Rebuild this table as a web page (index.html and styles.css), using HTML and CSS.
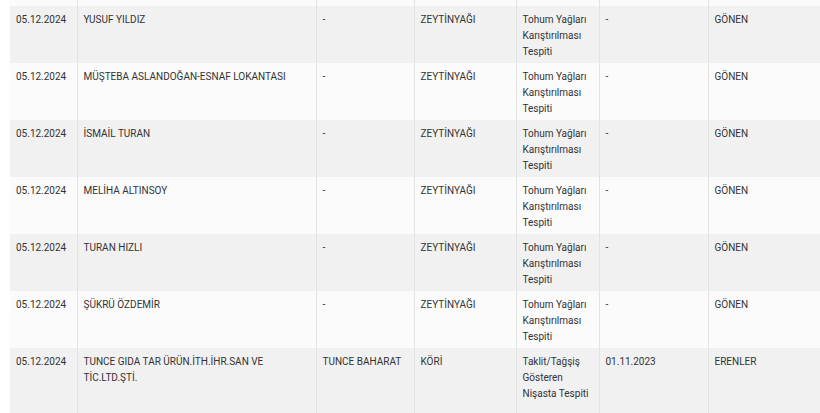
FILE: index.html
```html
<!DOCTYPE html>
<html lang="tr">
<head>
<meta charset="utf-8">
<link rel="stylesheet" href="styles.css">
</head>
<body>
<div class="wrap">
<table class="list">
<colgroup>
<col class="c-date"><col class="c-name"><col class="c-brand"><col class="c-product"><col class="c-test"><col class="c-batch"><col class="c-city">
</colgroup>
<tbody>
<tr class="odd stub"><td></td><td></td><td></td><td></td><td></td><td></td><td></td></tr>
<tr class="even"><td>05.12.2024</td><td>YUSUF YILDIZ</td><td>-</td><td>ZEYTİNYAĞI</td><td>Tohum Yağları Karıştırılması Tespiti</td><td>-</td><td>GÖNEN</td></tr>
<tr class="odd"><td>05.12.2024</td><td>MÜŞTEBA ASLANDOĞAN-ESNAF LOKANTASI</td><td>-</td><td>ZEYTİNYAĞI</td><td>Tohum Yağları Karıştırılması Tespiti</td><td>-</td><td>GÖNEN</td></tr>
<tr class="even"><td>05.12.2024</td><td>İSMAİL TURAN</td><td>-</td><td>ZEYTİNYAĞI</td><td>Tohum Yağları Karıştırılması Tespiti</td><td>-</td><td>GÖNEN</td></tr>
<tr class="odd"><td>05.12.2024</td><td>MELİHA ALTINSOY</td><td>-</td><td>ZEYTİNYAĞI</td><td>Tohum Yağları Karıştırılması Tespiti</td><td>-</td><td>GÖNEN</td></tr>
<tr class="even"><td>05.12.2024</td><td>TURAN HIZLI</td><td>-</td><td>ZEYTİNYAĞI</td><td>Tohum Yağları Karıştırılması Tespiti</td><td>-</td><td>GÖNEN</td></tr>
<tr class="odd"><td>05.12.2024</td><td>ŞÜKRÜ ÖZDEMİR</td><td>-</td><td>ZEYTİNYAĞI</td><td>Tohum Yağları Karıştırılması Tespiti</td><td>-</td><td>GÖNEN</td></tr>
<tr class="even last"><td>05.12.2024</td><td>TUNCE GIDA TAR ÜRÜN.İTH.İHR.SAN VE TİC.LTD.ŞTİ.</td><td>TUNCE BAHARAT</td><td>KÖRİ</td><td>Taklit/Tağşiş Gösteren Nişasta Tespiti</td><td>01.11.2023</td><td>ERENLER</td></tr>
</tbody>
</table>
</div>
</body>
</html>
```
FILE: styles.css
```css
html, body {
  margin: 0;
  padding: 0;
  background: #ffffff;
  overflow: hidden;
  height: 413px;
}
.wrap {
  padding-left: 10px;
}
.list {
  border-collapse: collapse;
  table-layout: fixed;
  width: 830px;
  font-family: Roboto, "Liberation Sans", sans-serif;
  font-size: 10px;
  line-height: 16px;
  color: #333333;
}
.c-date { width: 67px; }
.c-name { width: 239px; }
.c-brand { width: 98px; }
.c-product { width: 102px; }
.c-test { width: 83px; }
.c-batch { width: 109px; }
.c-city { width: 132px; }
.list td {
  vertical-align: top;
  padding: 6px 6px 0 6px;
  height: 51px;
  border-left: 1px solid #e3e3e3;
  overflow-wrap: break-word;
}
.list td:first-child {
  border-left: none;
}
.list tr.stub td {
  padding: 0;
  height: 6px;
}
.list tr.last td {
  height: 70px;
}
.list tr.even td {
  background: #f1f1f1;
}
.list tr.odd td {
  background: #fbfbfb;
}
```
